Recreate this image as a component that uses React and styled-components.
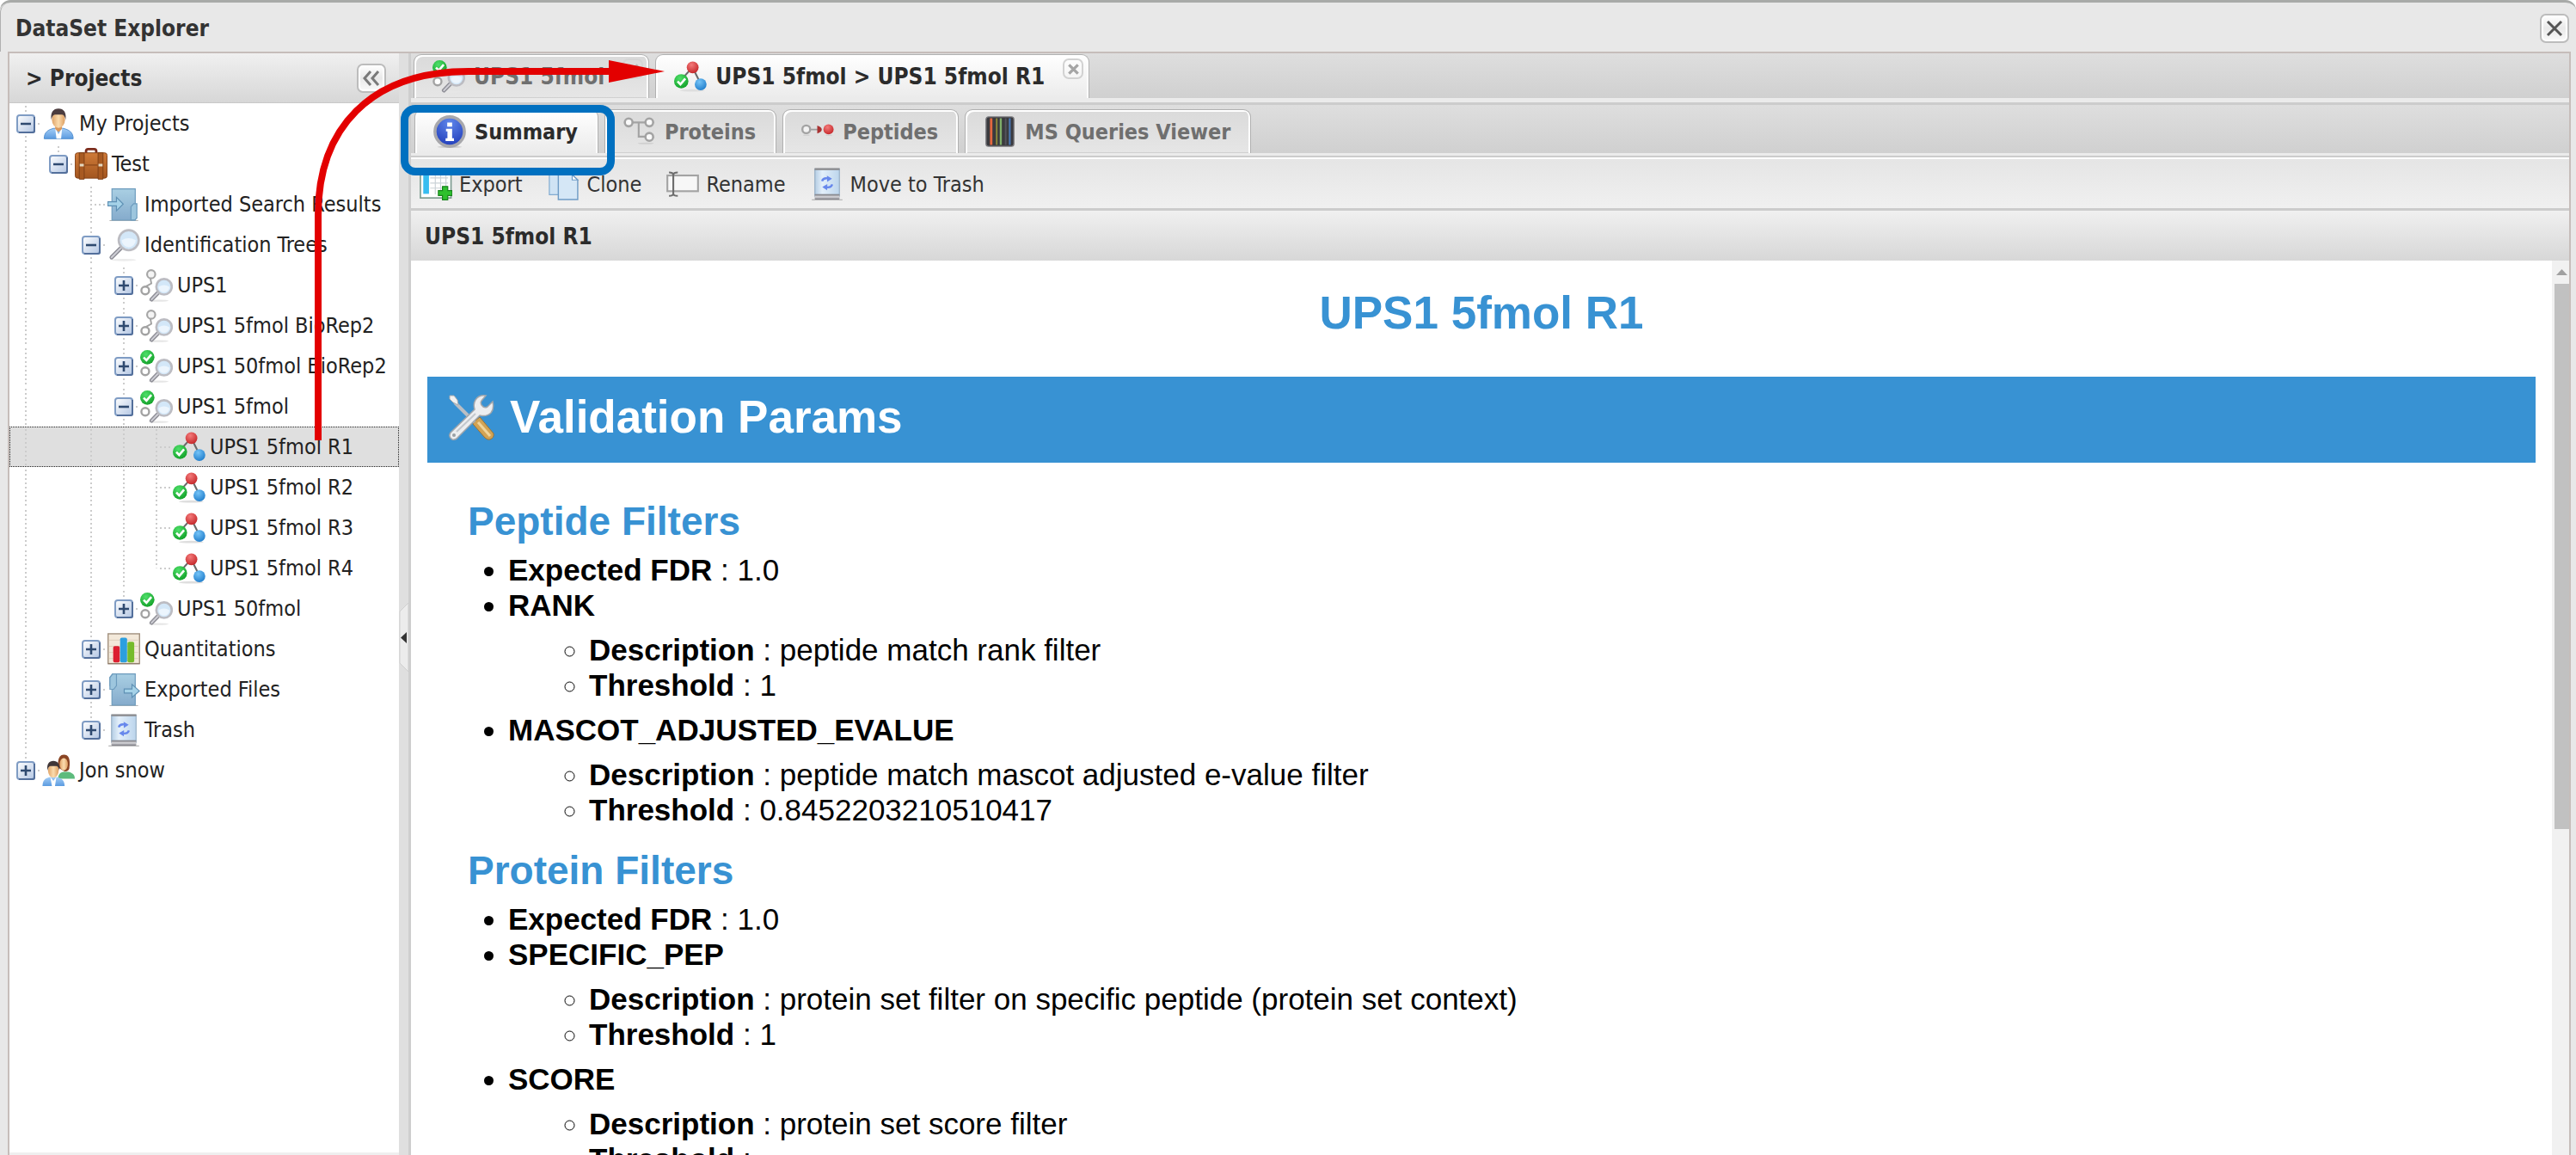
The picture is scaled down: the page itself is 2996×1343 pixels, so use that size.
import React from 'react';
import styled, { createGlobalStyle, css } from 'styled-components';

const GlobalStyle = createGlobalStyle`
    * {
        box-sizing: border-box;
    }

    body {
        margin: 0;
        background: #ffffff;
        overflow: hidden;
    }

    button {
        font: inherit;
        color: inherit;
        border: 0;
        padding: 0;
        background: none;
        cursor: pointer;
    }
`;

const uiFont = `'Tahoma', 'DejaVu Sans Condensed', 'DejaVu Sans', sans-serif`;

/* ---------- window ---------- */

const Window = styled.div`
    position: relative;
    display: flex;
    flex-direction: column;
    height: 100vh;
    background: #e8e8e8;
    border-top: 3px solid #a8aaa8;
    border-radius: 12px 12px 0 0;
    font-family: ${uiFont};
    font-size: 25px;
    color: #222222;
    overflow: hidden;
`;

const TitleBar = styled.header`
    display: flex;
    align-items: center;
    justify-content: space-between;
    flex: none;
    height: 57px;
    padding: 2px 8px 0 17px;
    border-left: 1px solid #b0b0b0;
    border-radius: 12px 12px 0 0;
`;

const WindowTitle = styled.h1`
    margin: 0;
    font-size: 26px;
    color: #333333;
`;

const ToolButton = styled.button`
    display: flex;
    align-items: center;
    justify-content: center;
    width: 34px;
    height: 34px;
    border: 2px solid #bcbcbc;
    border-radius: 7px;
    background: linear-gradient(#ffffff, #e9e9e9 50%, #fafafa);
    box-shadow: inset 0 0 0 2px #ffffff;
`;

const WindowBody = styled.div`
    display: flex;
    flex: 1;
    min-height: 0;
    margin: 0 6px 0 9px;
    border: 2px solid #c6bdba;
    border-bottom: 0;
`;

/* ---------- projects panel ---------- */

const Sidebar = styled.aside`
    display: flex;
    flex-direction: column;
    flex: none;
    width: 453px;
    background: #ffffff;
    border-bottom: 3px solid #efefef;
`;

const PanelHeader = styled.div`
    display: flex;
    align-items: center;
    justify-content: space-between;
    flex: none;
    height: 58px;
    padding: ${props => (props.$line ? 0 : 2)}px 15px 0 ${props => props.$indent}px;
    background: linear-gradient(#f0f0f0, #d7d7d7);
    border-bottom: ${props => (props.$line ? '1px solid #c8c8c8' : '0')};
`;

const PanelTitle = styled.h2`
    margin: 0;
    font-size: 26px;
    color: #2b2b2b;
`;

const Tree = styled.ul`
    margin: 0;
    padding: 0;
    list-style: none;
`;

const TreeRow = styled.li`
    display: flex;
    align-items: center;
    height: 47px;
    white-space: nowrap;

    ${props => props.$selected && css`
        background: #dfdfdf;
        outline: 1px dotted #222222;
        outline-offset: -1px;
    `};
`;

const dots = 'transparent 0 3px, #cccccc 3px 5px';

const Guide = styled.span`
    display: flex;
    align-items: center;
    justify-content: center;
    align-self: stretch;
    flex: none;
    width: 38px;
    background-repeat: no-repeat;
    background-image: ${props => [
        props.$stub && `repeating-linear-gradient(90deg, ${dots})`,
        props.$line && `repeating-linear-gradient(${dots})`,
        !props.$stub && !props.$line && 'none',
    ].filter(Boolean).join(', ')};
    background-size: ${props => [
        props.$stub && '18px 2px',
        props.$line && `2px ${props.$line === 'half' ? '50%' : '100%'}`,
    ].filter(Boolean).join(', ') || 'auto'};
    background-position: ${props => [
        props.$stub && 'right center',
        props.$line && '18px 0',
    ].filter(Boolean).join(', ') || '0 0'};
`;

const Expander = styled.button`
    display: flex;
    width: 22px;
    height: 22px;
`;

const TreeLabel = styled.span`
    margin-left: 5px;
    color: #222222;
`;

const Splitter = styled.div`
    display: flex;
    align-items: center;
    flex: none;
    width: 14px;
    background: #dfdfdf;
    border-right: 3px solid #cecece;
`;

const SplitterHandle = styled.button`
    display: flex;
    height: 80px;
    margin-top: 76px;
`;

/* ---------- main area ---------- */

const Main = styled.main`
    display: flex;
    flex-direction: column;
    flex: 1;
    min-width: 0;
`;

const TabStrip = styled.div`
    display: flex;
    align-items: flex-end;
    flex: none;
    gap: 7px;
    height: ${props => (props.$inner ? 56 : 52)}px;
    padding: 0 ${props => (props.$inner ? 4 : 3)}px;
    background: linear-gradient(#dedede, #d0d0d0);
    font-size: ${props => (props.$inner ? 25 : 26)}px;
`;

const StripBase = styled.div`
    flex: none;
    height: ${props => (props.$inner ? 5 : 8)}px;
    background: #ebebeb;
    border-bottom: ${props => (props.$inner ? 2 : 3)}px solid #cccccc;
`;

const Tab = styled.div`
    position: relative;
    height: 51px;
    padding: 0 ${props => (props.$closable ? 51 : 23)}px 0 21px;
    border: 1px solid #b0b0b0;
    border-bottom: 0;
    border-radius: 9px 9px 0 0;
    color: #6f6f6f;
    background: linear-gradient(#dadada, #e6e6e6);
    box-shadow: inset 2px 2px 0 #ffffff, inset -2px 0 0 #ffffff, inset 0 -1px 0 #d0d0d0;

    ${props => props.$active && css`
        color: #2b2b2b;
        background: linear-gradient(#ffffff, #ebebeb);
        box-shadow: inset 2px 2px 0 #ffffff, inset -2px 0 0 #ffffff;
    `};
`;

const TabButton = styled.button`
    display: flex;
    align-items: center;
    gap: 10px;
    height: 100%;
    font-weight: 700;
    white-space: nowrap;
`;

const TabClose = styled.button`
    position: absolute;
    top: 4px;
    right: 6px;
    display: flex;
    align-items: center;
    justify-content: center;
    width: 24px;
    height: 24px;
    border: 2px solid #d2d2d2;
    border-radius: 7px;
    opacity: ${props => (props.$faded ? 0.6 : 1)};
`;

const Toolbar = styled.div`
    display: flex;
    align-items: center;
    flex: none;
    gap: 29px;
    height: 62px;
    padding: 1px 0 0 10px;
    background: linear-gradient(#e5e5e5, #f0f0f0);
    border-top: 2px solid #ffffff;
    border-bottom: 3px solid #cccccc;
`;

const ToolbarButton = styled.button`
    display: flex;
    align-items: center;
    gap: 8px;
    color: #333333;
`;

/* ---------- report ---------- */

const ReportPane = styled.div`
    display: flex;
    flex: 1;
    min-height: 0;
    background: #ffffff;
`;

const Report = styled.article`
    flex: 1;
    padding: 0 19px;
    font-family: 'Liberation Sans', Arial, sans-serif;
    font-size: 35px;
    line-height: 41px;
    color: #000000;
    overflow: hidden;
`;

const ReportTitle = styled.h1`
    margin: 30px 0 43px;
    font-size: 53px;
    line-height: 62px;
    text-align: center;
    color: #3892d3;
`;

const Banner = styled.h2`
    display: flex;
    align-items: center;
    gap: 18px;
    height: 100px;
    margin: 0 0 42px;
    padding: 0 0 7px 24px;
    font-size: 53px;
    color: #ffffff;
    background: #3892d3;
`;

const FilterTitle = styled.h3`
    margin: 24px 0 9px 47px;
    font-size: 46px;
    line-height: 53px;
    color: #3892d3;
`;

const FilterList = styled.ul`
    margin: 0;
    padding-left: 94px;
    list-style: disc;

    ul {
        margin: 11px 0;
        list-style: circle;
    }
`;

const ScrollTrack = styled.div`
    display: flex;
    flex-direction: column;
    align-items: flex-end;
    flex: none;
    width: 20px;
    background: #f1f1f1;
`;

const ScrollUp = styled.button`
    display: flex;
    align-items: center;
    justify-content: center;
    flex: none;
    width: 17px;
    height: 27px;
`;

const ScrollThumb = styled.div`
    width: 17px;
    height: 61%;
    background: #c1c1c1;
`;

/* ---------- annotations drawn over the window ---------- */

const Arrow = styled.svg`
    position: absolute;
    top: -3px;
    left: 0;
    pointer-events: none;
`;

const Highlight = styled.div`
    position: absolute;
    top: 119px;
    left: 466px;
    width: 249px;
    height: 82px;
    border: 9px solid #0070c0;
    border-radius: 17px;
    pointer-events: none;
`;

/* ---------- icons ---------- */

const Icon = styled.svg.attrs({ viewBox: '0 0 16 16', 'aria-hidden': true })`
    flex: none;
    width: 38px;
    height: 38px;
`;

const Defs = styled.svg`
    position: absolute;
`;

const Gradients = () => (
    <Defs width="0" height="0" aria-hidden="true">
        <defs>
            <linearGradient id="btn" x1="0" y1="0" x2="1" y2="1">
                <stop offset="0" stopColor="#ffffff" />
                <stop offset="1" stopColor="#b3c6e3" />
            </linearGradient>
            <radialGradient id="green" cx="0.4" cy="0.3" r="0.8">
                <stop offset="0" stopColor="#4fe06a" />
                <stop offset="1" stopColor="#0c9a22" />
            </radialGradient>
            <radialGradient id="red" cx="0.4" cy="0.3" r="0.8">
                <stop offset="0" stopColor="#f47a7a" />
                <stop offset="1" stopColor="#c01f22" />
            </radialGradient>
            <radialGradient id="blue" cx="0.4" cy="0.3" r="0.8">
                <stop offset="0" stopColor="#74c3f7" />
                <stop offset="1" stopColor="#1a78c8" />
            </radialGradient>
            <radialGradient id="info" cx="0.5" cy="0.2" r="0.9">
                <stop offset="0" stopColor="#5f86ea" />
                <stop offset="1" stopColor="#1a35b5" />
            </radialGradient>
            <linearGradient id="skin" x1="0" y1="0" x2="1" y2="0">
                <stop offset="0" stopColor="#e0a468" />
                <stop offset="0.5" stopColor="#fbdcae" />
                <stop offset="1" stopColor="#dd9e60" />
            </linearGradient>
            <linearGradient id="shirt" x1="0" y1="0" x2="0" y2="1">
                <stop offset="0" stopColor="#a3cdf6" />
                <stop offset="1" stopColor="#5b9be0" />
            </linearGradient>
            <linearGradient id="page" x1="0" y1="0" x2="0" y2="1">
                <stop offset="0" stopColor="#a9cfe3" />
                <stop offset="1" stopColor="#85abcc" />
            </linearGradient>
            <linearGradient id="leather" x1="0" y1="0" x2="0" y2="1">
                <stop offset="0" stopColor="#cf7a38" />
                <stop offset="1" stopColor="#a3561f" />
            </linearGradient>
            <linearGradient id="glass" x1="0" y1="0" x2="1" y2="0">
                <stop offset="0" stopColor="#b4cde4" />
                <stop offset="0.3" stopColor="#e3effa" />
                <stop offset="1" stopColor="#bcd5ec" />
            </linearGradient>
            <linearGradient id="steel" x1="0" y1="0" x2="0" y2="1">
                <stop offset="0" stopColor="#6e6e74" />
                <stop offset="0.5" stopColor="#d8d8dc" />
                <stop offset="1" stopColor="#77777e" />
            </linearGradient>
        </defs>
    </Defs>
);

const ExpanderGlyph = ({ open }) => (
    <svg width="22" height="22" viewBox="0 0 22 22" aria-hidden="true">
        <rect x="1" y="1" width="20" height="20" rx="3" fill="url(#btn)" stroke="#7f9cc4" strokeWidth="2" />
        <path d="M21 3V19.500Q21 21 19 21H3" fill="none" stroke="#536f9b" strokeWidth="2" />
        <path d={open ? 'M5 11H17' : 'M5 11H17M11 5V17'} stroke="#2f4a70" strokeWidth="2.600" />
    </svg>
);

const Check = () => (
    <>
        <circle cx="3.500" cy="3.500" r="3.500" fill="url(#green)" />
        <path d="M1.700 3.600L3.100 5L5.500 2.200" fill="none" stroke="#ffffff" strokeWidth="1.100" />
    </>
);

const UserIcon = () => (
    <Icon>
        <path d="M1 15.300C1 12 3 10.800 5.800 10.200H10.200C13 10.800 15.200 12 15.200 15.300Z" fill="url(#shirt)" stroke="#4f8dd0" strokeWidth="0.400" />
        <path d="M6.400 10L8 13L9.800 10L9.300 15.300H7Z" fill="#ffffff" />
        <path d="M6.400 8.500H9.700V10.500L8 12L6.400 10.500Z" fill="#d9985c" />
        <ellipse cx="8" cy="6" rx="3.200" ry="4" fill="url(#skin)" />
        <path d="M4.500 6C4 2.400 5.400 0.500 8 0.500S12 2.400 11.500 6C11.200 4.400 10.600 3.600 9.800 3.500H6.200C5.200 3.700 4.800 4.600 4.500 6Z" fill="#4c3d3f" />
    </Icon>
);

const GroupIcon = () => (
    <Icon>
        <path d="M7.800 12C7.800 9.600 9 8.900 10.500 8.600H13C15 9.200 16 10 16 12Z" fill="#5dbb7d" />
        <path d="M7.800 6.500C7.500 2 8.600 0.200 10.700 0.200S14 2 13.300 6.800Q13 8.500 11 8.400Z" fill="#8a4524" />
        <ellipse cx="10.600" cy="4.900" rx="2" ry="3" fill="url(#skin)" />
        <path d="M0.200 15.600C0.200 12.900 1.500 11.600 4 11.200H7C9.500 11.600 11 12.900 11 15.600Z" fill="url(#shirt)" />
        <path d="M4 11L5.500 13L7 11L6.300 15.600H4.800Z" fill="#ffffff" />
        <ellipse cx="5.500" cy="8" rx="2.600" ry="3.500" fill="url(#skin)" />
        <path d="M2.600 8C2.200 4.800 3.400 3.300 5.500 3.300S8.800 4.800 8.400 8C8 6.300 7.600 5.900 7 5.800H4C3.300 6 2.900 6.600 2.600 8Z" fill="#3f3638" />
    </Icon>
);

const BriefcaseIcon = () => (
    <Icon>
        <path d="M5.500 3V1.600Q5.500 0.600 6.500 0.600H9.500Q10.500 0.600 10.500 1.600V3" fill="none" stroke="#7c2c1c" strokeWidth="1.200" />
        <rect x="0.200" y="2.400" width="15.600" height="12.400" rx="1.200" fill="url(#leather)" stroke="#84421a" strokeWidth="0.400" />
        <path d="M2.200 2.400H4.600V15.300H2.200ZM11.400 2.400H13.800V15.300H11.400Z" fill="#a85a22" stroke="#7d3f16" strokeWidth="0.400" />
        <path d="M2.400 8.400H4.400M11.600 8.400H13.600" stroke="#e4d8c0" strokeWidth="1.200" />
        <path d="M5 8.400H11" stroke="#7d3f16" strokeWidth="0.400" />
    </Icon>
);

const ImportIcon = () => (
    <Icon>
        <path d="M1 15.800H15" stroke="#b5b5b5" strokeWidth="0.500" />
        <path d="M2.200 0.300H13.600V15.500H2.200Z" fill="url(#page)" stroke="#6c9bbd" strokeWidth="0.500" />
        <path d="M11.500 15.500V9L12.800 7.500H14.400V14.500L13.400 15.500Z" fill="#9dc6de" stroke="#6c9bbd" strokeWidth="0.500" />
        <path d="M0.200 6.600H4.400V4.400L7.700 7.700L4.400 11V8.600H0.200Z" fill="#a5d2e8" stroke="#5e90b4" strokeWidth="0.500" />
    </Icon>
);

const ExportIcon = () => (
    <Icon>
        <path d="M1 15.800H15" stroke="#b5b5b5" strokeWidth="0.500" />
        <path d="M2.500 0.300H13.600V15.500H2.200V7L1.200 6V2Z" fill="url(#page)" stroke="#6c9bbd" strokeWidth="0.500" />
        <path d="M1.200 2L2.600 0.300H4.400V6L3 7.800H1.200Z" fill="#9dc6de" stroke="#6c9bbd" strokeWidth="0.500" />
        <path d="M8.200 7.600H12V5.400L15.600 8.600L12 11.800V9.600H8.200Z" fill="#a5d2e8" stroke="#5e90b4" strokeWidth="0.500" />
    </Icon>
);

const Lens = ({ cx, cy, r, hx, hy }) => (
    <>
        <path d={`M${cx - r * 0.7} ${cy + r * 0.7}L${hx} ${hy}`} stroke="#8e8e96" strokeWidth="2" strokeLinecap="round" />
        <path d={`M${cx - r * 0.7} ${cy + r * 0.7}L${hx} ${hy}`} stroke="#cfcfd6" strokeWidth="0.800" strokeLinecap="round" />
        <circle cx={cx} cy={cy} r={r} fill="#d3e7f8" stroke="#bcbcc2" strokeWidth="1.100" />
        <path d={`M${cx - r * 0.7} ${cy}Q${cx} ${cy - r * 0.4} ${cx + r * 0.7} ${cy}A${r * 0.7} ${r * 0.7} 0 0 1 ${cx - r * 0.7} ${cy}`} fill="#ecf5fd" />
    </>
);

const MagnifierIcon = () => (
    <Icon>
        <ellipse cx="8" cy="15.300" rx="6" ry="0.600" fill="#ececec" />
        <Lens cx={10.400} cy={5.600} r={4.900} hx={2} hy={14} />
    </Icon>
);

const SearchIcon = ({ valid }) => (
    <Icon>
        <ellipse cx="9" cy="15.400" rx="5" ry="0.500" fill="#e6e6e6" />
        {valid
            ? <Check />
            : (
                <>
                    <path d="M5 4.500L5.500 7L2.800 8.500" fill="none" stroke="#a2a2a2" strokeWidth="0.800" />
                    <circle cx="5.400" cy="2.500" r="2" fill="#f4f4f4" stroke="#a6a6a6" strokeWidth="0.900" />
                </>
            )}
        <circle cx="2.500" cy="10.400" r="1.900" fill="#ffffff" stroke="#a2a2a2" strokeWidth="1" />
        <Lens cx={11.700} cy={8.600} r={3.800} hx={5.600} hy={14.800} />
    </Icon>
);

const ResultIcon = () => (
    <Icon>
        <ellipse cx="9" cy="14.800" rx="6" ry="0.600" fill="#dedede" />
        <path d="M4 9L9 3.500L13 11.500" fill="none" stroke="#6b6b6b" strokeWidth="0.900" />
        <circle cx="9.100" cy="3.500" r="2.900" fill="url(#red)" />
        <circle cx="13" cy="11.800" r="2.900" fill="url(#blue)" />
        <g transform="translate(0 6.800)"><Check /></g>
    </Icon>
);

const ChartIcon = () => (
    <Icon>
        <rect x="0.300" y="0.400" width="15.400" height="14.600" fill="#f3e9da" stroke="#a39280" strokeWidth="0.600" />
        <path d="M0.800 3.500H15M0.800 6.500H15M0.800 9.500H15M0.800 12.500H15" stroke="#ddcfbb" strokeWidth="0.400" />
        <rect x="2.800" y="6.400" width="3.200" height="8" rx="0.800" fill="#dc1f30" />
        <rect x="6.200" y="2.300" width="3.400" height="12.100" rx="0.800" fill="#2c9fdf" />
        <rect x="9.800" y="4.300" width="3.300" height="10.100" rx="0.800" fill="#76bb2b" />
        <path d="M0.300 15H15.700" stroke="#8f7e6c" strokeWidth="0.600" />
    </Icon>
);

const TrashIcon = () => (
    <Icon>
        <path d="M0.500 15.700H15.500" stroke="#b8b8b8" strokeWidth="0.500" />
        <rect x="2" y="0.600" width="12" height="13.500" fill="url(#glass)" stroke="#98afc6" strokeWidth="0.500" />
        <rect x="1.900" y="0.200" width="12.200" height="1" fill="#8d8d90" />
        <rect x="1.900" y="12.900" width="12.200" height="2.700" rx="0.400" fill="url(#steel)" />
        <path d="M5.500 6.600Q6 5 8 5.200" fill="none" stroke="#6788ec" strokeWidth="1" />
        <path d="M7.900 3.900L10.400 5.400L8 6.900Z" fill="#6788ec" />
        <path d="M10.500 8.200Q10 9.800 8 9.600" fill="none" stroke="#6788ec" strokeWidth="1" />
        <path d="M8.100 8L5.600 9.500L8 11Z" fill="#6788ec" />
    </Icon>
);

const InfoIcon = () => (
    <Icon>
        <ellipse cx="8" cy="15.500" rx="6" ry="0.500" fill="#cfcfcf" />
        <circle cx="8" cy="8" r="7.200" fill="url(#info)" stroke="#a8a8ac" strokeWidth="1.500" />
        <path d="M6.800 3.600H9.200V5.600H6.800ZM6.200 6.600H9.200V11.300H10.100V12.600H6V11.300H6.900V7.900H6.200Z" fill="#ffffff" />
    </Icon>
);

const ProteinsIcon = () => (
    <Icon>
        <path d="M4 3.500H11M7.500 3.500V10.500H11" fill="none" stroke="#a3a3a3" strokeWidth="0.900" />
        <g fill="#fafafa" stroke="#a3a3a3" strokeWidth="1.100">
            <circle cx="2.600" cy="3.500" r="1.900" />
            <circle cx="12.700" cy="3.500" r="1.900" />
            <circle cx="12.700" cy="10.600" r="1.900" />
        </g>
        <ellipse cx="11" cy="13.800" rx="4" ry="0.400" fill="#d0d0d0" />
    </Icon>
);

const PeptidesIcon = () => (
    <Icon>
        <path d="M4 7H8" stroke="#9d9d9d" strokeWidth="0.700" />
        <circle cx="2.400" cy="6.900" r="1.900" fill="#f2f2f2" stroke="#a3a3a3" strokeWidth="1" />
        <path d="M7.800 5Q10 5.700 10 7Q10 8.200 7.800 8.900Z" fill="#a83232" />
        <circle cx="13.300" cy="6.900" r="2.500" fill="url(#red)" />
        <path d="M1 9.800H4M12 9.800H15" stroke="#cccccc" strokeWidth="0.500" />
    </Icon>
);

const SpectrumIcon = () => (
    <Icon>
        <rect x="1.200" y="0.800" width="13.600" height="14.400" rx="1.200" fill="#3a3a3e" stroke="#77777b" strokeWidth="0.600" />
        <path d="M3.700 1.500V14.500" stroke="#e4673e" strokeWidth="1.200" />
        <path d="M6.400 1.500V14.500" stroke="#8e8a3a" strokeWidth="0.800" />
        <path d="M8.400 1.500V14.500" stroke="#7fae6a" strokeWidth="1" />
        <path d="M10.800 1.500V14.500" stroke="#54545c" strokeWidth="0.800" />
        <path d="M12.800 1.500V14.500" stroke="#4a78b4" strokeWidth="0.900" />
    </Icon>
);

const TableAddIcon = () => (
    <Icon>
        <rect x="0.400" y="0.400" width="15" height="14.400" fill="#ffffff" stroke="#7d9c90" strokeWidth="0.700" />
        <rect x="0.800" y="0.800" width="14.200" height="2.400" fill="#b5d2e4" />
        <rect x="1.800" y="3.800" width="2.800" height="9" fill="#37bdf0" />
        <path d="M5.200 5H14M5.200 7.500H14M5.200 10H14M7.700 3.800V13M10.300 3.800V13M12.900 3.800V13" stroke="#cbd3d8" strokeWidth="0.500" />
        <path d="M11.200 9.200H13.800V11.200H15.900V13.600H13.800V15.700H11.200V13.600H9.200V11.200H11.200Z" fill="#2ec02e" stroke="#17831c" strokeWidth="0.500" />
    </Icon>
);

const CloneIcon = () => (
    <Icon>
        <path d="M0.800 0.400H7.500V13.200H0.800Z" fill="#cfe3f4" stroke="#82abd0" strokeWidth="0.500" />
        <path d="M5.200 3.500H12L14.700 6V15.600H5.200Z" fill="#d5e7f6" stroke="#6f9cc6" strokeWidth="0.600" />
        <path d="M12 3.500V6H14.700Z" fill="#ffffff" stroke="#6f9cc6" strokeWidth="0.500" />
    </Icon>
);

const RenameIcon = () => (
    <Icon>
        <rect x="0.500" y="3.800" width="15" height="7.700" fill="#f7f7f7" stroke="#a3a3a3" strokeWidth="0.900" />
        <path d="M1.300 2.300Q3.200 2.300 3.400 3.400Q3.600 2.300 5.600 2.300M3.400 3.200V13M1.300 13.800Q3.200 13.800 3.400 12.800Q3.600 13.800 5.600 13.800" fill="none" stroke="#6d6d6d" strokeWidth="0.900" />
    </Icon>
);

const ToolsIcon = () => (
    <svg width="54" height="54" viewBox="0 0 54 54" aria-hidden="true">
        <path d="M33 30L37 27L53 46Q54 51 49 53Q46 54 43 51L29 35Z" fill="#d2a354" stroke="#9a7334" />
        <path d="M35 33L49 49" stroke="#f0d49a" strokeWidth="3" />
        <path d="M8 10L31 33" stroke="#b9bec4" strokeWidth="4" />
        <path d="M2 2L7 2L11 7L12 13L6 10L2 6Z" fill="#f2f2f2" stroke="#a5a9ad" />
        <path d="M44 2Q36 1 32 7Q29 12 31 18L3 45Q0 50 5 53Q9 54 12 50L37 25Q45 27 50 22Q54 17 52 9L46 15Q42 17 40 14Q37 11 39 8Z" fill="#eceef0" stroke="#a0a6ac" strokeWidth="1.500" />
        <path d="M10 44L32 23" stroke="#c3c8cd" strokeWidth="2" />
        <circle cx="7" cy="48" r="2" fill="#9aa0a6" />
    </svg>
);

const CrossGlyph = ({ size, color, weight }) => (
    <svg width={size} height={size} viewBox="0 0 20 20" aria-hidden="true">
        <path d="M2 2L18 18M18 2L2 18" stroke={color} strokeWidth={weight} />
    </svg>
);

/* ---------- data ---------- */

// guides: one entry per indent column, '1' draws the vertical line through the row
const treeRows = [
    { label: 'My Projects', icon: <UserIcon />, guides: '', open: true, line: 'full' },
    { label: 'Test', icon: <BriefcaseIcon />, guides: '1', open: true, line: 'half' },
    { label: 'Imported Search Results', icon: <ImportIcon />, guides: '10', line: 'full' },
    { label: 'Identification Trees', icon: <MagnifierIcon />, guides: '10', open: true, line: 'full' },
    { label: 'UPS1', icon: <SearchIcon />, guides: '101', open: false, line: 'full' },
    { label: 'UPS1 5fmol BioRep2', icon: <SearchIcon />, guides: '101', open: false, line: 'full' },
    { label: 'UPS1 50fmol BioRep2', icon: <SearchIcon valid />, guides: '101', open: false, line: 'full' },
    { label: 'UPS1 5fmol', icon: <SearchIcon valid />, guides: '101', open: true, line: 'full' },
    { label: 'UPS1 5fmol R1', icon: <ResultIcon />, guides: '1011', line: 'full', selected: true },
    { label: 'UPS1 5fmol R2', icon: <ResultIcon />, guides: '1011', line: 'full' },
    { label: 'UPS1 5fmol R3', icon: <ResultIcon />, guides: '1011', line: 'full' },
    { label: 'UPS1 5fmol R4', icon: <ResultIcon />, guides: '1011', line: 'half' },
    { label: 'UPS1 50fmol', icon: <SearchIcon valid />, guides: '101', open: false, line: 'half' },
    { label: 'Quantitations', icon: <ChartIcon />, guides: '10', open: false, line: 'full' },
    { label: 'Exported Files', icon: <ExportIcon />, guides: '10', open: false, line: 'full' },
    { label: 'Trash', icon: <TrashIcon />, guides: '10', open: false, line: 'half' },
    { label: 'Jon snow', icon: <GroupIcon />, guides: '', open: false, line: 'half' },
];

const documentTabs = [
    { label: 'UPS1 5fmol', icon: <SearchIcon valid /> },
    { label: 'UPS1 5fmol > UPS1 5fmol R1', icon: <ResultIcon />, active: true },
];

const viewTabs = [
    { label: 'Summary', icon: <InfoIcon />, active: true },
    { label: 'Proteins', icon: <ProteinsIcon /> },
    { label: 'Peptides', icon: <PeptidesIcon /> },
    { label: 'MS Queries Viewer', icon: <SpectrumIcon /> },
];

const actions = [
    { label: 'Export', icon: <TableAddIcon /> },
    { label: 'Clone', icon: <CloneIcon /> },
    { label: 'Rename', icon: <RenameIcon /> },
    { label: 'Move to Trash', icon: <TrashIcon /> },
];

const filterGroups = [
    {
        title: 'Peptide Filters',
        fdr: '1.0',
        filters: [
            { name: 'RANK', description: 'peptide match rank filter', threshold: '1' },
            { name: 'MASCOT_ADJUSTED_EVALUE', description: 'peptide match mascot adjusted e-value filter', threshold: '0.8452203210510417' },
        ],
    },
    {
        title: 'Protein Filters',
        fdr: '1.0',
        filters: [
            { name: 'SPECIFIC_PEP', description: 'protein set filter on specific peptide (protein set context)', threshold: '1' },
            { name: 'SCORE', description: 'protein set score filter', threshold: '' },
        ],
    },
];

/* ---------- components ---------- */

const TreeItem = ({ row }) => {
    const leaf = row.open === undefined;

    return (
        <TreeRow $selected={row.selected}>
            {row.guides.split('').map((guide, i) => (
                <Guide key={i} $line={guide === '1' ? 'full' : null} />
            ))}
            <Guide $line={row.line} $stub>
                {!leaf && (
                    <Expander aria-label={`${row.open ? 'Collapse' : 'Expand'} ${row.label}`}>
                        <ExpanderGlyph open={row.open} />
                    </Expander>
                )}
            </Guide>
            {row.icon}
            <TreeLabel>{row.label}</TreeLabel>
        </TreeRow>
    );
};

const FilterGroup = ({ group }) => (
    <section>
        <FilterTitle>{group.title}</FilterTitle>
        <FilterList>
            <li><b>Expected FDR</b> : {group.fdr}</li>
            {group.filters.map(filter => (
                <li key={filter.name}>
                    <b>{filter.name}</b>
                    <FilterList>
                        <li><b>Description</b> : {filter.description}</li>
                        <li><b>Threshold</b> : {filter.threshold}</li>
                    </FilterList>
                </li>
            ))}
        </FilterList>
    </section>
);

const App = () => (
    <Window>
        <GlobalStyle />
        <Gradients />

        <TitleBar>
            <WindowTitle>DataSet Explorer</WindowTitle>
            <ToolButton aria-label="Close window">
                <CrossGlyph size={20} color="#555555" weight={3} />
            </ToolButton>
        </TitleBar>

        <WindowBody>
            <Sidebar>
                <PanelHeader $indent={19} $line>
                    <PanelTitle>&gt; Projects</PanelTitle>
                    <ToolButton aria-label="Collapse panel">
                        <svg width="20" height="18" viewBox="0 0 20 18" aria-hidden="true">
                            <path d="M9 1L2 9L9 17M18 1L11 9L18 17" fill="none" stroke="#7a7a7a" strokeWidth="3" />
                        </svg>
                    </ToolButton>
                </PanelHeader>
                <Tree>
                    {treeRows.map(row => <TreeItem key={row.label} row={row} />)}
                </Tree>
            </Sidebar>

            <Splitter>
                <SplitterHandle aria-label="Collapse projects">
                    <svg width="11" height="80" viewBox="0 0 11 80" aria-hidden="true">
                        <path d="M11 0L1 10V70L11 80Z" fill="#ececec" stroke="#cfcfcf" />
                        <path d="M9 34V47L2 40.500Z" fill="#333333" />
                    </svg>
                </SplitterHandle>
            </Splitter>

            <Main>
                <TabStrip>
                    {documentTabs.map(tab => (
                        <Tab key={tab.label} $active={tab.active} $closable>
                            <TabButton>{tab.icon}{tab.label}</TabButton>
                            <TabClose $faded={!tab.active} aria-label={`Close ${tab.label}`}>
                                <CrossGlyph size={13} color="#a5a5a5" weight={5} />
                            </TabClose>
                        </Tab>
                    ))}
                </TabStrip>
                <StripBase />

                <TabStrip $inner>
                    {viewTabs.map(tab => (
                        <Tab key={tab.label} $active={tab.active}>
                            <TabButton>{tab.icon}{tab.label}</TabButton>
                        </Tab>
                    ))}
                </TabStrip>
                <StripBase $inner />

                <Toolbar>
                    {actions.map(action => (
                        <ToolbarButton key={action.label}>{action.icon}{action.label}</ToolbarButton>
                    ))}
                </Toolbar>

                <PanelHeader $indent={16}>
                    <PanelTitle>UPS1 5fmol R1</PanelTitle>
                </PanelHeader>

                <ReportPane>
                    <Report>
                        <ReportTitle>UPS1 5fmol R1</ReportTitle>
                        <Banner><ToolsIcon />Validation Params</Banner>
                        {filterGroups.map(group => <FilterGroup key={group.title} group={group} />)}
                    </Report>
                    <ScrollTrack>
                        <ScrollUp aria-label="Scroll up">
                            <svg width="13" height="7" viewBox="0 0 13 7" aria-hidden="true">
                                <path d="M0 7L6.500 0L13 7Z" fill="#a0a0a0" />
                            </svg>
                        </ScrollUp>
                        <ScrollThumb />
                    </ScrollTrack>
                </ReportPane>
            </Main>
        </WindowBody>

        <Highlight />
        <Arrow width="790" height="520" viewBox="0 0 790 520" aria-hidden="true">
            <path d="M370 512V250C370 150 430 83 545 83H710" fill="none" stroke="#e30000" strokeWidth="8" />
            <path d="M708 70L773 83L708 96Z" fill="#e30000" />
        </Arrow>
    </Window>
);

export default App;
